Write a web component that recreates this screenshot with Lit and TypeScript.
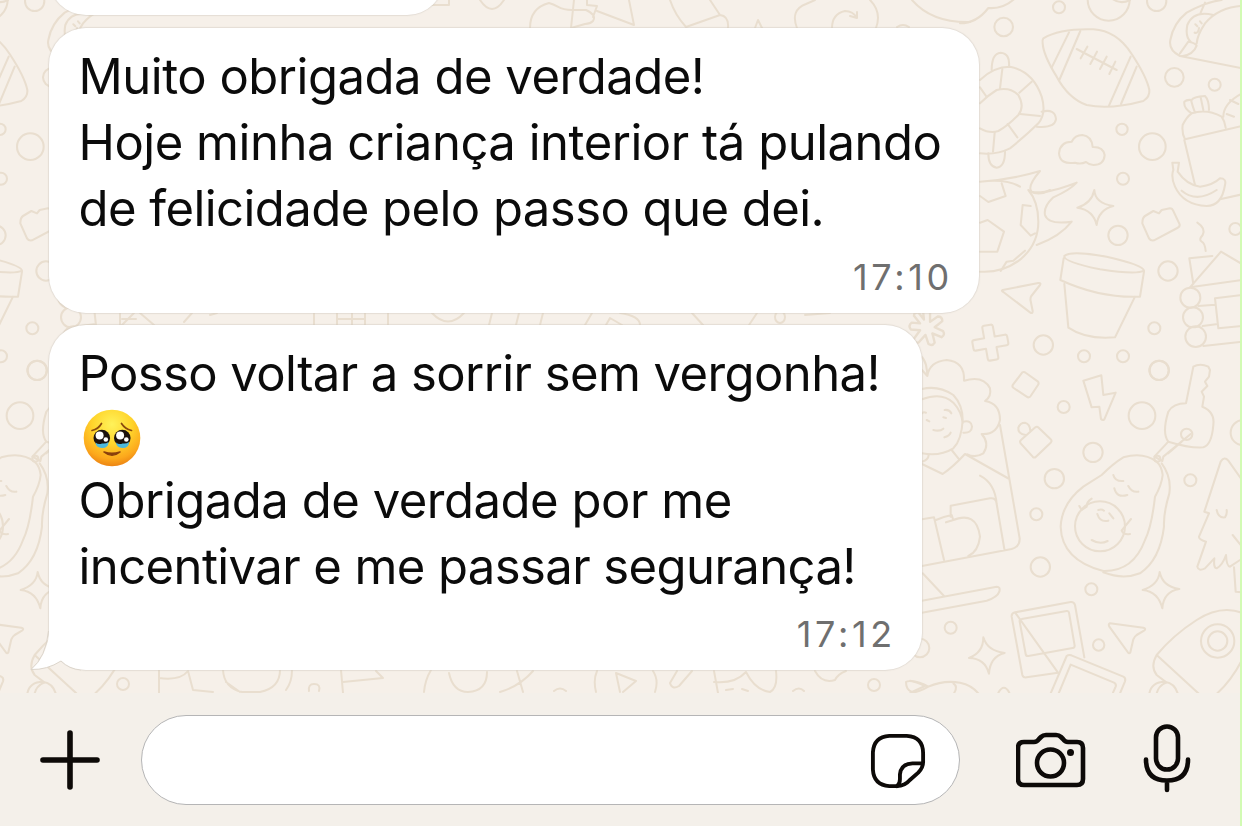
import {LitElement, html, css, svg} from 'lit';
import {customElement, property} from 'lit/decorators.js';

type Line = {text?: string; emoji?: boolean; spacing?: number};
type Message = {lines: Line[]; time: string; kind: string};

const messages: Message[] = [
  {
    kind: 'first',
    time: '17:10',
    lines: [
      {text: 'Muito obrigada de verdade!', spacing: -0.48},
      {text: 'Hoje minha criança interior tá pulando', spacing: -0.48},
      {text: 'de felicidade pelo passo que dei.', spacing: -0.54},
    ],
  },
  {
    kind: 'last',
    time: '17:12',
    lines: [
      {text: 'Posso voltar a sorrir sem vergonha!', spacing: -0.58},
      {emoji: true},
      {text: 'Obrigada de verdade por me', spacing: -0.47},
      {text: 'incentivar e me passar segurança!', spacing: -0.59},
    ],
  },
];

// Doodles are drawn on a grid three times finer than the screen.
const doodles = svg`
  <g transform="translate(960 0) scale(.33333)">
    <path d="M0 70Q50 70 85 24Q130 28 165 -5M455 -5Q480 15 510 0" />
    <circle cx="297" cy="22" r="18" /><circle cx="131" cy="81" r="28" />
    <circle cx="446" cy="-1" r="63" /><circle cx="590" cy="4" r="29" />
    <path d="M250 115Q300 85 400 88Q470 92 515 162Q560 230 568 270Q570 290 550 303Q450 330 380 315Q325 295 290 230Q250 165 248 130Q246 120 250 115Z" />
    <path d="M327 97L275 203M361 93L298 240M512 170L447 317M530 200L483 312" />
    <path d="M350 147L470 210M382 140L362 175M411 155L391 192M440 170L420 207M466 185L448 222" />
    <path d="M660 168Q625 150 631 120Q640 70 680 38Q740 5 785 0M660 168L846 205M846 17Q775 22 735 70Q712 105 710 130M760 45Q700 30 682 75Q675 110 692 125M660 160L685 125Q705 128 710 137Q700 165 665 169M722 38L735 8M706 73l6 6M720 64l5 6M704 98Q715 102 717 84" />
    <circle cx="643" cy="232" r="28" /><circle cx="764" cy="254" r="18" />
    <circle cx="577" cy="440" r="40" /><circle cx="486" cy="388" r="17" />
    <circle cx="489" cy="536" r="18" />
    <path d="M345 488Q300 495 297 460Q300 425 335 425Q345 405 367 405Q395 408 398 441Q430 440 434 465Q432 495 400 495Q388 495 378 486Q362 494 345 488Z" />
    <path d="M60 240Q100 200 150 200Q220 215 245 290Q260 340 235 370Q200 405 150 445Q110 465 60 460M60 310Q85 285 110 270Q150 260 175 285Q195 320 175 345Q140 380 115 393Q90 402 60 385" />
    <path d="M127 207L120 265M215 245L178 278M180 342L240 348M143 372L172 412M104 398L99 455M60 262L78 288M95 210Q95 160 122 158Q150 160 147 198M245 335Q285 325 288 357Q285 385 230 380M85 460Q85 500 110 503Q135 500 135 455" />
    <path d="M675 418Q665 400 668 375Q680 350 695 340Q740 325 785 350Q795 365 797 383M675 418L846 378M673 420L705 555M695 340Q670 325 673 305Q680 298 695 300Q700 290 735 288Q747 300 747 330M693 300Q698 320 705 338M722 292L730 330M846 280Q790 310 790 350M810 300L835 312M800 342L822 350" />
    <path d="M637 488L657 488L653 515Q680 555 720 560Q760 555 780 535Q800 535 795 555Q785 618 740 618Q670 615 645 560Q632 530 640 510ZM665 572Q710 610 770 570M780 598L846 583" />
    <path d="M60 545Q150 540 240 513Q200 560 215 575Q250 585 350 548Q330 570 280 592Q250 620 255 645Q265 675 335 665Q300 710 230 735M60 545Q140 535 180 560M125 550L137 588L85 606L60 588M205 570Q235 605 235 665Q235 730 185 775Q130 820 60 815" />
  </g>
  <g transform="translate(960 190) scale(.33333)">
    <path d="M60 98L83 90L132 125L112 185L60 185M212 48L188 45L182 105L212 137L225 130M122 243L140 215L160 212L195 182M210 5Q240 18 270 0" />
    <path d="M403 0Q405 40 460 48Q415 60 410 105Q400 60 352 53Q395 40 403 0Z" />
    <circle cx="474" cy="136" r="29" /><circle cx="826" cy="117" r="18" />
    <circle cx="624" cy="243" r="29" /><circle cx="250" cy="465" r="29" />
    <circle cx="372" cy="499" r="18" /><circle cx="489" cy="499" r="18" />
    <circle cx="583" cy="415" r="18" /><circle cx="598" cy="541" r="29" />
    <path d="M555 78L580 63L597 70L605 60L630 55Q637 55 640 63L659 103Q660 110 652 114L582 151Q572 153 567 145L547 100Q547 83 555 78Z" />
    <path d="M712 98Q738 115 728 135Q715 150 725 155Q735 160 737 183" />
    <path d="M313 198Q330 180 440 200Q550 225 552 242Q530 255 420 238Q310 215 313 198ZM311 205L301 270Q420 325 540 320L552 245M313 282L325 413Q380 450 465 442L525 320" />
    <path d="M690 292L783 185L846 222M690 292L846 270M700 282L688 205L757 198M715 348L765 344M728 408L768 403M730 468L846 455M846 315L765 325L775 415L846 408" />
    <circle cx="691" cy="323" r="30" /><circle cx="699" cy="382" r="30" /><circle cx="707" cy="440" r="31" />
    <path d="M128 300L235 279Q244 278 240 285L214 318Q210 325 212 333L218 363Q218 373 210 367L130 306Q123 302 128 300Z" />
    <path transform="rotate(-10 91 458)" d="M81 405H101Q107 405 107 411V442H138Q144 442 144 448V468Q144 474 138 474H107V505Q107 511 101 511H81Q75 511 75 505V474H44Q38 474 38 468V448Q38 442 44 442H75V411Q75 405 81 405Z" />
    <path transform="translate(-99 414) scale(1.15)" d="M-10 -42Q0 -48 8 -40L8 -16L28 -30Q40 -30 40 -18L20 -2L42 8Q48 18 38 24L14 14L20 38Q14 48 4 42L-4 18L-22 38Q-34 40 -34 28L-18 6L-42 4Q-50 -6 -40 -14L-18 -12L-34 -32Q-34 -42 -22 -40L-8 -22Z" />
  </g>
  <g transform="translate(910 360) scale(.33333)">
    <path d="M36 30L52 48Q58 5 110 0Q165 5 162 62Q220 45 240 85Q245 110 225 123Q270 130 270 180Q260 225 215 222Q240 250 220 280Q195 295 172 283M0 -25Q40 -20 48 15Q52 35 52 48" />
    <path d="M36 87Q85 75 130 105Q158 135 158 180Q155 240 130 265Q90 290 36 280M36 118Q95 95 130 128Q155 155 158 190M160 185Q185 180 186 200Q185 220 160 218M70 210Q90 215 100 206M103 232Q118 228 122 218M50 180l8 4M100 172l8 2M104 150Q118 148 124 160M36 160Q40 155 48 158" />
    <path d="M36 312L98 342Q130 320 165 282L298 357M125 270L145 295M36 305Q55 300 56 285M270 195L329 535Q330 560 305 567L36 618M210 347Q255 370 260 432M122 470L122 437L240 415Q258 412 260 432L283 567M36 478L72 472L102 600M78 480Q100 470 125 465L130 480L108 487M125 482Q200 450 210 530Q205 575 175 588M38 640L102 708M36 722L260 680Q272 680 268 695Q262 712 230 722L36 758" />
    <path d="M337 37Q342 34 348 39L383 64Q388 69 384 75L362 108Q357 115 350 110L311 84Q305 80 309 74Z" />
    <path d="M520 62L574 46L580 105L617 98L583 178Q578 182 573 177L568 140L545 142Z" />
    <path d="M376 202Q381 198 386 203L422 238Q427 243 422 248L378 290Q373 295 368 290L332 250Q328 244 333 240ZM347 225Q323 222 325 203Q330 188 345 188Q360 192 361 212" />
    <circle cx="747" cy="31" r="29" />
    <circle cx="461" cy="141" r="18" /><circle cx="696" cy="167" r="40" />
    <circle cx="549" cy="277" r="29" /><circle cx="433" cy="356" r="29" />
    <circle cx="379" cy="463" r="18" /><circle cx="841" cy="361" r="18" />
    <circle cx="1000" cy="218" r="38" />
    <path d="M828 130L850 20Q870 8 895 20L900 30L897 50L885 65L892 78L875 95L882 110L877 140Q915 155 910 195Q905 255 880 262Q840 265 775 245Q755 220 775 155Q790 130 828 130ZM775 245L733 290L757 303L760 290L842 222M775 280L815 245" />
    <circle cx="830" cy="223" r="17" /><circle cx="742" cy="296" r="9" />
    <path d="M740 305Q700 275 640 292Q610 310 575 345L520 380Q455 430 452 500Q455 600 580 633Q670 635 705 540Q725 500 735 410Q755 375 758 345Q755 318 740 305ZM755 310Q785 350 778 400Q760 460 762 500Q750 600 690 640Q640 660 580 637" />
    <circle cx="570" cy="499" r="75" />
    <path d="M610 345Q615 365 640 363M655 378Q665 398 685 395M613 385Q620 415 652 405M508 438L515 450L530 440Q530 425 545 416M663 477L640 505L635 512Q640 525 660 522M562 462Q570 488 595 482M565 450Q575 446 582 452M598 460L610 475M545 540Q570 555 593 543" />
    <path d="M996 360L955 302Q943 288 932 305L883 455L897 460L867 530Q866 538 888 545L862 620Q865 635 885 625L913 595Q910 625 920 625Q938 615 948 585Q950 620 960 620L990 600M972 622L977 695L996 697M920 450Q925 475 945 472Q952 462 950 450M968 525L996 560" />
  </g>
  <g transform="translate(910 520) scale(.33333)">
    <circle cx="391" cy="141" r="29" /><circle cx="544" cy="208" r="18" />
    <circle cx="122" cy="323" r="18" /><circle cx="566" cy="375" r="17" />
    <circle cx="30" cy="384" r="28" />
    <circle cx="923" cy="363" r="50" /><circle cx="923" cy="363" r="29" />
    <path d="M749 156Q758 200 808 207Q760 215 757 265Q745 215 698 210Q745 195 749 156Z" />
    <path d="M220 352Q232 393 284 399Q240 410 237 461Q225 415 177 414Q220 398 220 352Z" />
    <path d="M315 277L482 246Q492 245 495 255L523 412M444 458L350 472Q340 474 337 465L305 290Q304 280 315 277ZM335 297L470 273Q476 272 477 278L494 377Q494 383 488 384L355 408Q348 409 347 402L329 305Q328 298 335 297Z" />
    <path d="M422 520L470 408Q476 403 484 406L640 470Q648 474 645 484L630 520M446 520L482 434L612 488Q620 492 617 500L609 518" />
    <path d="M600 310L700 323Q710 326 702 332L680 345Q673 350 670 358L661 397Q657 403 653 396L598 320Q594 312 600 310Z" />
    <path d="M996 278Q930 255 860 300Q790 345 740 405Q720 440 740 465L770 488M740 405L865 520M996 420Q965 480 922 520M718 520Q725 485 765 485Q795 490 803 520M740 520Q745 498 768 488" />
    <path d="M0 482Q30 485 55 500Q30 515 0 520M55 500Q100 480 150 488Q185 495 205 520M130 490Q145 500 132 520M265 518Q282 488 298 518" />
  </g>`;

@customElement('chat-wallpaper')
class ChatWallpaper extends LitElement {
  static styles = css`
    :host {
      display: block;
    }
    svg {
      display: block;
      width: 100%;
      height: 100%;
    }
    .lines {
      fill: none;
      stroke: #e9decf;
      stroke-width: 6.2;
      stroke-linecap: round;
      stroke-linejoin: round;
    }
    .thin {
      stroke-width: 2;
    }
  `;

  render() {
    return html`<svg viewBox="0 0 1242 826">
      <g class="lines">
        <g id="tile">${doodles}</g>
        <use href="#tile" x="-1122" />
        <!-- strips that show between the bubbles -->
        <g class="thin">
          <path d="M430 5h19v-6M480 0Q492 18 504 0M530 28Q530 8 549 3C560 6 558 10 572 10H586Q597 15 593 21Q590 24 585 24L571 28L574 0M587 0V5L597 6L593 17M597 11L634 25L629 0M670 0Q675 15 686 27L720 15L710 0M720 15Q729 16 728 28M755 28L758 20L762 28M797 28Q790 10 806 4L815 0M832 28Q832 14 845 11Q853 11 857 18V12M857 18L850 16M870 0Q882 12 876 28M897 27Q903 23 909 27M912 0Q932 23 970 22" />
          <path d="M120 313V325M122 319H136M134 313L122 325M140 313L154 325M184 322L192 313M210 315L217 313M314 313V325M337 313V325M337 319H365M352 313V325M365 313V325M388 313V325M432 313Q448 330 464 313M492 313L489 325M519 313L516 325M543 313L540 325M592 313L585 325M606 325L610 318L622 325M620 313Q640 316 640 325M692 313L703 325M757 313L749 325M775 317a5 6 0 1 0 10 0a5 6 0 1 0 -10 0M805 315L830 313" />
          <path d="M159 670V693M159 678Q180 681 188 671L193 690L213 692M223 670Q224 688 242 692H260Q280 688 280 670M226 682L240 692M292 670Q292 682 286 690M341 670L343 693M343 682L383 678L376 671M431 670Q425 680 424 692M449 673Q453 692 468 692Q487 691 487 672" />
          <circle cx="123" cy="684" r="6" /><path d="M309 691Q308 684 314 684Q321 684 319 691" />
          <path d="M500 692Q520 686 533 671M517 671L523 692M554 691Q560 686 566 691M597 671Q593 680 596 692M616 673L636 681L623 692M616 673L620 692M653 671Q659 680 655 692M677 671L670 683Q672 690 679 686L692 671M714 671L718 693M714 682Q735 684 746 672Q755 690 770 692Q778 688 776 671M726 690L733 689M742 689L748 691M793 691Q799 686 804 691M815 671Q822 684 835 680Q838 674 846 671" />
          <circle cx="874" cy="685" r="6" />
          <path d="M906 682Q910 679 925 686L912 692Q906 690 906 682" />
        </g>
      </g>
    </svg>`;
  }
}

@customElement('tearful-face')
class TearfulFace extends LitElement {
  static styles = css`
    :host,
    svg {
      display: block;
      width: 58px;
      height: 58px;
    }
  `;

  render() {
    return html`<svg viewBox="0 0 58 58" role="img">
      <defs>
        <radialGradient id="skin" cx=".5" cy=".26" r=".76">
          <stop offset="0" stop-color="#fff25a" />
          <stop offset=".45" stop-color="#ffd52c" />
          <stop offset=".8" stop-color="#fca81c" />
          <stop offset="1" stop-color="#ea7f12" />
        </radialGradient>
      </defs>
      <circle cx="29" cy="29" r="28.3" fill="url(#skin)" />
      <path d="M9 21.500Q15.500 20 18.500 14.500M48.500 21.500Q42 20 38.500 14.500" fill="none" stroke="#8a4a0d" stroke-width="1.700" stroke-linecap="round" />
      <g id="eye">
        <circle cx="18.800" cy="29" r="8.300" fill="#1c120e" />
        <circle cx="16.600" cy="26.500" r="4" fill="#fff" />
        <circle cx="22.800" cy="30.500" r="2.300" fill="#fff" />
        <path d="M12.500 33.500Q15.500 36 19 34.500Q23 35 25.500 33Q25.500 39 19 39Q13 38.500 12.500 33.500Z" fill="#4db9dd" />
      </g>
      <use href="#eye" x="20.500" />
      <path d="M21 43Q29 49.500 37 43Q29 45.500 21 43Z" fill="#8a3f0c" stroke="#8a3f0c" stroke-width="1.600" stroke-linejoin="round" />
    </svg>`;
  }
}

@customElement('chat-bubble')
class ChatBubble extends LitElement {
  static styles = css`
    :host {
      display: block;
      position: relative;
      box-sizing: border-box;
      background: #fff;
      border-radius: 37px;
      box-shadow: 0 0 1px 1px rgba(205, 198, 188, 0.45);
      padding: 16px 26px 0 29.5px;
      font-family: Inter, 'Liberation Sans', sans-serif;
      color: #0b0b0b;
    }
    .line {
      height: 66px;
      line-height: 66px;
      font-size: 49px;
      white-space: pre;
    }
    .face {
      height: 61px;
      display: flex;
      align-items: center;
      padding-left: 4.5px;
    }
    .time {
      display: block;
      text-align: right;
      font-size: 36px;
      line-height: 44px;
      letter-spacing: 3.7px;
      color: #6f6f6f;
      margin-top: 13px;
    }
    .time.last {
      margin-top: 12px;
    }
    .tail {
      position: absolute;
      left: -20px;
      bottom: -1px;
      width: 52px;
      height: 56px;
    }
  `;

  @property({attribute: false}) message!: Message;

  render() {
    const {lines, time, kind} = this.message;
    return html`
      ${lines.map((l) =>
        l.emoji
          ? html`<div class="face"><tearful-face></tearful-face></div>`
          : html`<div class="line"><span style="letter-spacing:${l.spacing}px">${l.text}</span></div>`
      )}
      <span class="time ${kind}">${time}</span>
      ${kind === 'last'
        ? html`<svg class="tail" viewBox="0 0 52 56">
            <path d="M20 0V20Q17 42 2 54.500Q18 55 32 46Q40 54 52 55V0Z" fill="#fff" />
            <path d="M19.500 16Q17 42 2 54.500Q18 55 32 46Q40 54 52 55" fill="none" stroke="#dcd5cb" stroke-width="1" />
          </svg>`
        : ''}
    `;
  }
}

@customElement('chat-composer')
class ChatComposer extends LitElement {
  static styles = css`
    :host {
      display: flex;
      box-sizing: border-box;
      height: 133px;
      padding: 22px 50px 0 40px;
      background: #f4f0ea;
    }
    svg {
      display: block;
      fill: none;
      stroke: #0d0a08;
      stroke-width: 4.6;
      stroke-linecap: round;
      stroke-linejoin: round;
    }
    .plus {
      width: 60px;
      height: 90px;
      stroke-width: 5.6;
    }
    .field {
      box-sizing: border-box;
      width: 819px;
      height: 90px;
      margin-left: 41px;
      padding-right: 33.5px;
      border: 1px solid #b5b5b6;
      border-radius: 45px;
      background: #fff;
      display: flex;
      align-items: center;
      justify-content: flex-end;
    }
    .sticker {
      width: 56px;
      height: 56px;
      margin-top: 1px;
      stroke-width: 4;
    }
    .camera {
      width: 70px;
      height: 90px;
      margin-left: 56px;
    }
    .mic {
      width: 48px;
      height: 90px;
      margin-left: 57px;
    }
    .dot {
      fill: #0d0a08;
      stroke: none;
    }
  `;

  render() {
    return html`
      <svg class="plus" viewBox="0 0 60 90"><path d="M3 45H57M30 18V72" /></svg>
      <div class="field">
        <svg class="sticker" viewBox="0 0 58 58">
          <path d="M20 3H38Q55 4 55 21V30Q55 36 50 41L41 49Q36 55 28 55H20Q4 54 3 38V20Q4 4 20 3Z" />
          <path d="M54 31.500H44Q32 32 31 43V48Q31 53 28 55" />
        </svg>
      </div>
      <svg class="camera" viewBox="0 0 70 90">
        <path d="M8 27H18Q21 27 23 24L25 22Q27 20 30 20H40Q43 20 45 22L47 24Q49 27 52 27H61Q67 27 67 33V64Q67 70 61 70H8Q2 70 2 64V33Q2 27 8 27Z" />
        <circle cx="34.500" cy="48" r="13.500" />
        <circle class="dot" cx="54.500" cy="37.500" r="3.500" />
      </svg>
      <svg class="mic" viewBox="0 0 48 90">
        <rect x="13" y="11.500" width="22" height="43" rx="11" />
        <path d="M3 44.500Q3 65.500 24 65.500Q45 65.500 45 44.500M24 66V75" />
      </svg>
    `;
  }
}

@customElement('app-root')
class AppRoot extends LitElement {
  static styles = css`
    :host {
      display: flex;
      flex-direction: column;
      position: relative;
      width: 1242px;
      height: 826px;
      overflow: hidden;
      background: #f6f0e9;
    }
    chat-wallpaper {
      position: absolute;
      inset: 0;
    }
    .thread {
      position: relative;
      height: 693px;
      box-sizing: border-box;
      padding-left: 49px;
      display: flex;
      flex-direction: column;
    }
    .previous {
      flex: none;
      width: 395px;
      height: 80px;
      margin-top: -65px;
      margin-bottom: 13px;
      background: #fff;
      border-radius: 37px;
      box-shadow: 0 0 1px 1px rgba(205, 198, 188, 0.45);
    }
    .first {
      flex: none;
      width: 930px;
      height: 285px;
      margin-bottom: 12px;
    }
    .last {
      flex: none;
      width: 873px;
      height: 345px;
    }
    chat-composer {
      position: relative;
    }
    .edge {
      position: absolute;
      top: 0;
      right: 0;
      width: 2px;
      height: 100%;
      background: #d2fbb4;
    }
  `;

  render() {
    return html`
      <chat-wallpaper></chat-wallpaper>
      <div class="thread">
        <div class="previous"></div>
        ${messages.map(
          (m) => html`<chat-bubble class=${m.kind} .message=${m}></chat-bubble>`
        )}
      </div>
      <chat-composer></chat-composer>
      <div class="edge"></div>
    `;
  }
}
